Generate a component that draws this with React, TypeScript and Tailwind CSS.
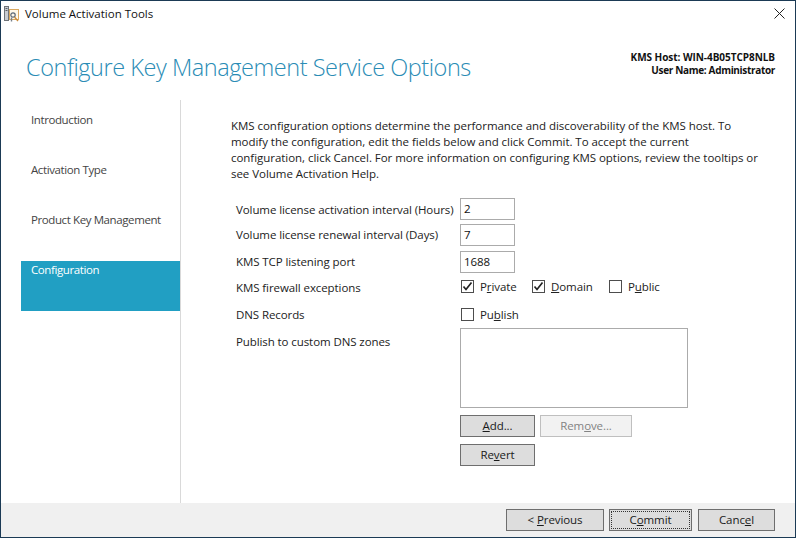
const font = { fontFamily: '"Open Sans", "Noto Sans", sans-serif' };

function AppIcon() {
  return (
    <svg width="16" height="18" viewBox="0 0 16 18" className="shrink-0">
      <rect x="0.5" y="1.5" width="4" height="14" fill="#c9ccd1" stroke="#6f7378" />
      <rect x="1.5" y="3" width="2" height="1" fill="#5a5e63" />
      <rect x="1.5" y="5" width="2" height="1" fill="#5a5e63" />
      <rect x="5.5" y="4.5" width="9" height="10" fill="#fff8e8" stroke="#d9a860" />
      <circle cx="9" cy="10" r="2.2" fill="none" stroke="#5d6a78" strokeWidth="1.2" />
      <path d="M10.5 12l3.5 4" stroke="#c98a3a" strokeWidth="1.4" />
      <path d="M7.5 12.5v4" stroke="#77808a" strokeWidth="1.4" />
    </svg>
  );
}

function Check({ checked, label, className }: { checked?: boolean; label: React.ReactNode; className?: string }) {
  return (
    <div className={`flex items-center h-[13px] ${className ?? ''}`}>
      <span className="w-[13px] h-[13px] border border-[#4d4d4d] bg-white flex items-center justify-center shrink-0">
        {checked && (
          <svg width="11" height="11" viewBox="0 0 11 11">
            <path d="M1.5 5.5L4 8.5L9.5 1.5" fill="none" stroke="#222" strokeWidth="1.7" />
          </svg>
        )}
      </span>
      <span className="ml-[6px] leading-[16px]">{label}</span>
    </div>
  );
}

function Btn({ children, className, disabled }: { children: React.ReactNode; className?: string; disabled?: boolean }) {
  return (
    <div
      className={`h-[22px] flex items-center justify-center border leading-none ${
        disabled ? 'border-[#bfbfbf] bg-[#f2f2f2] text-[#838383]' : 'border-[#6e6e6e] bg-[#dddddd] text-[#1a1a1a]'
      } ${className ?? ''}`}
    >
      {children}
    </div>
  );
}

function Field({ value }: { value: string }) {
  return (
    <div className="w-[55px] h-[22px] border border-[#ababab] bg-white pl-[3px] leading-[20px] text-[#111]">{value}</div>
  );
}

const steps = ['Introduction', 'Activation Type', 'Product Key Management', 'Configuration'];

export default function App() {
  return (
    <div
      style={font}
      className="w-[796px] h-[538px] border border-[#1b3a55] bg-white flex flex-col overflow-hidden text-[11.5px] tracking-[-0.09px] text-[#222]"
    >
      <div className="h-[25px] flex items-center pl-[3px] pr-[10px] shrink-0">
        <AppIcon />
        <span className="ml-[5px] text-[#111] tracking-[0px]">Volume Activation Tools</span>
        <svg width="11" height="11" viewBox="0 0 11 11" className="ml-auto">
          <path d="M0.5 0.5L10.5 10.5M10.5 0.5L0.5 10.5" stroke="#222" strokeWidth="1" />
        </svg>
      </div>

      <div className="h-[74px] flex items-start justify-between pl-[25px] pr-[20px] shrink-0">
        <h1 className="mt-[24px] text-[23.5px] leading-[34px] tracking-[-0.45px] font-light text-[#2a8cb5]">
          Configure Key Management Service Options
        </h1>
        <div className="mt-[25px] text-right text-[10px] leading-[13px] tracking-[-0.05px] font-bold text-[#111]">
          <div>KMS Host: WIN-4B05TCP8NLB</div>
          <div className="tracking-[-0.33px]">User Name: Administrator</div>
        </div>
      </div>

      <div className="flex-1 flex min-h-0">
        <div className="ml-[20px] w-[160px] border-r border-[#d9d9d9] pt-[11px] shrink-0 tracking-[-0.4px]">
          {steps.map((s, i) => (
            <div
              key={s}
              className={`h-[50px] w-[159px] pl-[10px] leading-[17px] ${i === 3 ? 'bg-[#219fc3] text-white' : 'text-[#444]'}`}
            >
              {s}
            </div>
          ))}
        </div>

        <div className="pl-[50px] pt-[18px] flex-1">
          <p className="whitespace-nowrap leading-[16px] tracking-[-0.04px] text-[#222]">
            KMS configuration options determine the performance and discoverability of the KMS host. To
            <br />
            modify the configuration, edit the fields below and click Commit. To accept the current
            <br />
            configuration, click Cancel. For more information on configuring KMS options, review the tooltips or
            <br />
            see Volume Activation Help.
          </p>

          <div className="mt-[16px] ml-[5px] grid grid-cols-[224px_1fr]">
            <div className="h-[26px] pt-[3px] leading-[18px]">Volume license activation interval (Hours)</div>
            <Field value="2" />
            <div className="h-[27px] pt-[2px] leading-[18px]">Volume license renewal interval (Days)</div>
            <Field value="7" />
            <div className="h-[29px] pt-[2px] leading-[18px]">KMS TCP listening port</div>
            <Field value="1688" />
            <div className="h-[28px] leading-[16px]">KMS firewall exceptions</div>
            <div className="flex pl-px h-[28px]">
              <Check checked className="w-[71px]" label={<>P<u>r</u>ivate</>} />
              <Check checked className="w-[77px]" label={<><u>D</u>omain</>} />
              <Check label={<>P<u>u</u>blic</>} />
            </div>
            <div className="h-[20px] leading-[14px]">DNS Records</div>
            <div className="pl-px h-[20px]">
              <Check label={<>Pu<u>b</u>lish</>} />
            </div>
            <div className="leading-[18px] pt-[5px]">Publish to custom DNS zones</div>
            <div>
              <div className="w-[228px] h-[80px] border border-[#ababab] bg-white" />
              <div className="mt-[7px] flex gap-[5px]">
                <Btn className="w-[75px]"><span><u>A</u>dd...</span></Btn>
                <Btn disabled className="w-[92px]"><span>Rem<u>o</u>ve...</span></Btn>
              </div>
              <Btn className="w-[75px] mt-[7px]"><span>Re<u>v</u>ert</span></Btn>
            </div>
          </div>
        </div>
      </div>

      <div className="h-[34px] bg-[#f0f0f0] flex items-start justify-end pt-[6px] pr-[20px] shrink-0">
        <Btn className="w-[98px]"><span>&lt; <u>P</u>revious</span></Btn>
        <Btn className="w-[83px] ml-[5px] outline outline-1 outline-dotted outline-offset-[-3px] outline-[#333]"><span>C<u>o</u>mmit</span></Btn>
        <Btn className="w-[77px] ml-[6px]"><span>Canc<u>e</u>l</span></Btn>
      </div>
    </div>
  );
}
